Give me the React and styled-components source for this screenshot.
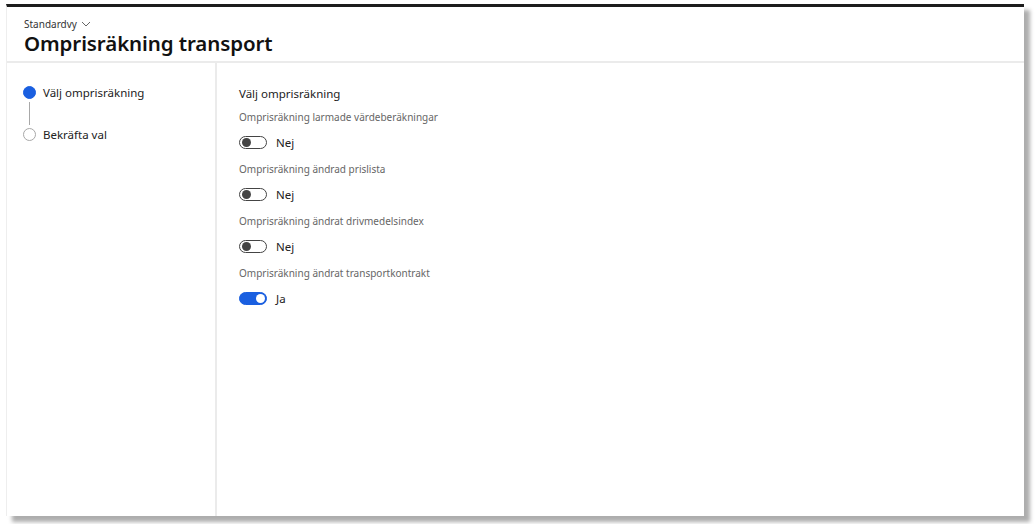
import React from "react";
import styled, { createGlobalStyle } from "styled-components";

const Global = createGlobalStyle`
  body {
    margin: 0;
    background: #ffffff;
    font-family: "Noto Sans", "Open Sans", sans-serif;
  }
`;

const fields = [
  { label: "Omprisräkning larmade värdeberäkningar", on: false },
  { label: "Omprisräkning ändrad prislista", on: false },
  { label: "Omprisräkning ändrat drivmedelsindex", on: false },
  { label: "Omprisräkning ändrat transportkontrakt", on: true },
];

function App() {
  return (
    <>
      <Global />
      <Stage>
        <Window>
          <Header>
            <ViewPicker>
              Standardvy
              <svg width="10" height="6" viewBox="0 0 10 6">
                <path d="M1 1l4 4 4-4" fill="none" stroke="#666" strokeWidth="1" />
              </svg>
            </ViewPicker>
            <Title>Omprisräkning transport</Title>
          </Header>
          <Body>
            <Steps>
              <Step>
                <Dot active />
                <StepText>Välj omprisräkning</StepText>
              </Step>
              <Connector />
              <Step>
                <Dot />
                <StepText>Bekräfta val</StepText>
              </Step>
            </Steps>
            <Content>
              <SectionTitle>Välj omprisräkning</SectionTitle>
              {fields.map((f) => (
                <Field key={f.label}>
                  <Label>{f.label}</Label>
                  <ToggleRow>
                    <Toggle on={f.on}>
                      <Knob on={f.on} />
                    </Toggle>
                    <ToggleText>{f.on ? "Ja" : "Nej"}</ToggleText>
                  </ToggleRow>
                </Field>
              ))}
            </Content>
          </Body>
        </Window>
      </Stage>
    </>
  );
}

export default App;

const Stage = styled.div`
  width: 1035px;
  height: 524px;
  padding: 4px 0 0 6px;
  box-sizing: border-box;
`;

const Window = styled.div`
  width: 1018px;
  height: 512px;
  background: #fff;
  border-top: 3px solid #1c1c1c;
  border-left: 1px solid #eeeeee;
  box-sizing: border-box;
  box-shadow: 6px 6px 4px rgba(0, 0, 0, 0.32);
  display: flex;
  flex-direction: column;
`;

const Header = styled.div`
  height: 56px;
  padding: 10px 0 0 17px;
  box-sizing: border-box;
  border-bottom: 2px solid #ebebeb;
`;

const ViewPicker = styled.div`
  display: flex;
  align-items: center;
  gap: 4px;
  font-size: 10px;
  color: #333;
  line-height: 14px;
`;

const Title = styled.h1`
  margin: 0;
  font-size: 20.5px;
  font-weight: 600;
  color: #111;
  line-height: 24px;
  letter-spacing: -0.1px;
`;

const Body = styled.div`
  flex: 1;
  display: flex;
`;

const Steps = styled.div`
  width: 210px;
  border-right: 2px solid #ebebeb;
  padding: 22px 0 0 16px;
  box-sizing: border-box;
`;

const Step = styled.div`
  display: flex;
  align-items: center;
  gap: 7px;
`;

const Dot = styled.span`
  width: 13px;
  height: 13px;
  border-radius: 50%;
  box-sizing: border-box;
  background: ${(p) => (p.active ? "#1a5fe0" : "#fff")};
  border: 1px solid ${(p) => (p.active ? "#1a5fe0" : "#a8a8a8")};
`;

const Connector = styled.div`
  width: 1px;
  height: 23px;
  margin: 2px 0 2px 6px;
  background: #a8a8a8;
`;

const StepText = styled.span`
  font-size: 11.5px;
  color: #222;
`;

const Content = styled.div`
  padding: 23px 0 0 22px;
`;

const SectionTitle = styled.div`
  font-size: 11.5px;
  color: #222;
  line-height: 16px;
  margin-bottom: 8px;
`;

const Field = styled.div`
  height: 52px;
`;

const Label = styled.div`
  font-size: 10px;
  color: #666;
  line-height: 14px;
`;

const ToggleRow = styled.div`
  display: flex;
  align-items: center;
  gap: 9px;
  margin-top: 11px;
`;

const Toggle = styled.span`
  width: 28px;
  height: 13px;
  border-radius: 7px;
  box-sizing: border-box;
  border: 1.5px solid ${(p) => (p.on ? "#1a5fe0" : "#444")};
  background: ${(p) => (p.on ? "#1a5fe0" : "#fff")};
  display: flex;
  align-items: center;
  justify-content: ${(p) => (p.on ? "flex-end" : "flex-start")};
  padding: 0 1.5px;
`;

const Knob = styled.span`
  width: 9px;
  height: 9px;
  border-radius: 50%;
  background: ${(p) => (p.on ? "#fff" : "#444")};
`;

const ToggleText = styled.span`
  font-size: 11.5px;
  color: #222;
`;
